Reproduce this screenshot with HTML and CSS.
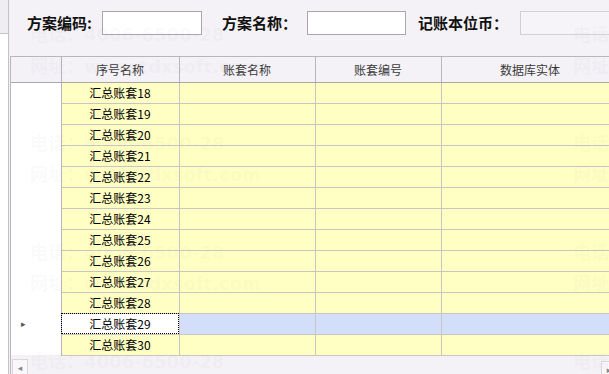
FILE: index.html
```html
<!DOCTYPE html>
<html lang="zh-CN">
<head>
    <meta charset="utf-8">
    <title>账套方案</title>
    <link rel="stylesheet" href="styles.css">
</head>
<body>
    <div class="frame">
        <div class="side">
            <div class="side-top"></div>
        </div>
        <div class="main">
            <div class="form">
                <label class="lbl lbl1">方案编码:</label>
                <input class="box box1" type="text">
                <label class="lbl lbl2">方案名称：</label>
                <input class="box box2" type="text">
                <label class="lbl lbl3">记账本位币：</label>
                <input class="box box3" type="text" disabled>
            </div>
            <div class="grid">
                <table class="sheet">
                    <colgroup>
                        <col class="c0"><col class="c1"><col class="c2"><col class="c3"><col class="c4">
                    </colgroup>
                    <thead>
                        <tr>
                            <th class="rh"></th>
                            <th>序号名称</th>
                            <th>账套名称</th>
                            <th>账套编号</th>
                            <th>数据库实体</th>
                        </tr>
                    </thead>
                    <tbody id="rows"></tbody>
                </table>
                <div class="hscroll">
                    <span class="arrow left">&#9666;</span>
                    <span class="arrow right">&#9656;</span>
                </div>
            </div>
        </div>
    </div>

    <div class="mark">
        <span class="wm" style="left:30px;top:20px">电话：4006-6500-28</span>
        <span class="wm" style="left:30px;top:52px">网址：www.tdxsoft.com</span>
        <span class="wm" style="left:573px;top:20px">电话：4006-6500-28</span>
        <span class="wm" style="left:573px;top:52px">网址：www.tdxsoft.com</span>
        <span class="wm" style="left:30px;top:129px">电话：4006-6500-28</span>
        <span class="wm" style="left:30px;top:160px">网址：www.tdxsoft.com</span>
        <span class="wm" style="left:573px;top:129px">电话：4006-6500-28</span>
        <span class="wm" style="left:573px;top:160px">网址：www.tdxsoft.com</span>
        <span class="wm" style="left:30px;top:238px">电话：4006-6500-28</span>
        <span class="wm" style="left:30px;top:269px">网址：www.tdxsoft.com</span>
        <span class="wm" style="left:573px;top:238px">电话：4006-6500-28</span>
        <span class="wm" style="left:573px;top:269px">网址：www.tdxsoft.com</span>
        <span class="wm" style="left:30px;top:347px">电话：4006-6500-28</span>
        <span class="wm" style="left:573px;top:347px">电话：4006-6500-28</span>
    </div>

    <script>
        let body = document.getElementById("rows");
        for (let i = 18; i <= 30; i++) {
            let tr = document.createElement("tr");
            if (i === 29) tr.className = "sel";
            tr.innerHTML = '<td class="rh">' + (i === 29 ? '<span class="ptr">&#9656;</span>' : '') + '</td>'
                + '<td class="name"><span>汇总账套' + i + '</span></td><td></td><td></td><td></td>';
            body.appendChild(tr);
        }
    </script>
</body>
</html>
```

FILE: styles.css
```css
*{
    margin:0;
    padding:0;
    box-sizing:border-box;
}
body{
    width:609px;
    height:374px;
    overflow:hidden;
    background-color:#f4f2f6;
    font-family:"Noto Sans CJK SC", "DejaVu Sans", sans-serif;
    position:relative;
}
.frame{
    display:flex;
    height:374px;
}
.side{
    width:9px;
    flex:none;
    background-color:#ffffff;
    border-right:1px solid #c4c2c6;
}
.side-top{
    height:34px;
    background-color:#efedf1;
    border-bottom:1px solid #c4c2c6;
}
.main{
    flex:1;
    min-width:0;
    display:flex;
    flex-direction:column;
}
/* top form */
.form{
    height:56px;
    padding-top:11px;
    display:flex;
    align-items:flex-start;
}
.lbl{
    height:24px;
    line-height:23px;
    font-size:15px;
    font-weight:700;
    color:#111;
    flex:none;
}
.lbl1{ width:75px; margin-left:18px; }
.lbl2{ width:85px; }
.lbl3{ width:102px; }
.box{
    height:24px;
    width:100px;
    flex:none;
    border:1px solid #a8a6aa;
    background-color:#ffffff;
}
.box1{ margin-right:20px; }
.box2{ width:99px; margin-right:12px; }
.box3{
    width:100px;
    border-color:#d2d0d4;
    background-color:#f6f4f8;
}
/* grid */
.grid{
    margin-left:1px;
    border-left:1px solid #b8b6ba;
    border-top:1px solid #b8b6ba;
    overflow:hidden;
    flex:1;
    display:flex;
    flex-direction:column;
}
.sheet{
    border-collapse:collapse;
    table-layout:fixed;
    width:608px;
    font-size:12px;
}
.c0{ width:50px; }
.c1{ width:118px; }
.c2{ width:136px; }
.c3{ width:126px; }
.c4{ width:178px; }
.sheet th{
    height:25px;
    font-weight:400;
    color:#3a3a3a;
    background-color:transparent;
    border-right:1px solid #b8b6ba;
    border-bottom:1px solid #a9a7ab;
    text-align:center;
    padding-top:1px;
}
.sheet td{
    height:21px;
    background-color:#ffffc4;
    border-right:1px solid #c9c6c2;
    border-bottom:1px solid #c9c6c2;
    color:#000;
    text-align:center;
    padding:0;
}
.sheet td.rh{
    background-color:#ffffff;
    border-bottom:none;
    border-right:1px solid #b8b6ba;
    text-align:left;
}
.sheet .sel td{
    background-color:#d3dffa;
}
.sheet .sel td.rh{
    background-color:#ffffff;
}
.sheet .sel td.name{
    background-color:#ffffff;
    outline:1px dotted #000;
    outline-offset:-1px;
}
.name span{
    display:inline-block;
    line-height:20px;
}
.ptr{
    font-size:9px;
    color:#555;
    margin-left:10px;
    line-height:20px;
}
.hscroll{
    height:20px;
    position:relative;
}
.arrow{
    position:absolute;
    top:3px;
    height:17px;
    width:16px;
    font-size:9px;
    color:#888;
    line-height:16px;
    text-align:center;
    border:1px solid #dad8dc;
    background-color:#f8f7f9;
}
.arrow.left{ left:1px; }
.arrow.right{ left:590px; top:5px; }
/* watermark overlay */
.mark{
    position:absolute;
    left:0;
    top:0;
    width:609px;
    height:374px;
    pointer-events:none;
}
.wm{
    position:absolute;
    white-space:nowrap;
    font-family:"DejaVu Sans", "Noto Sans CJK SC", sans-serif;
    font-size:18px;
    font-weight:700;
    color:rgba(120, 110, 130, 0.05);
}
```
